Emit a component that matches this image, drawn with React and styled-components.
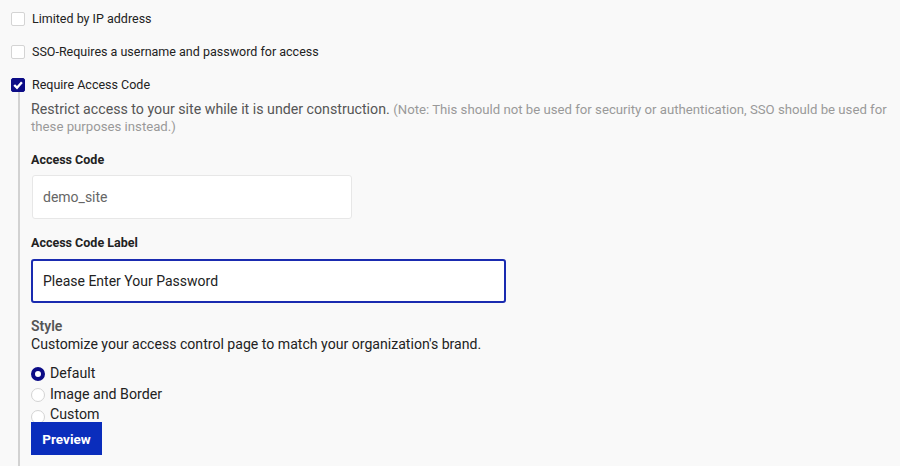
import React, { useState } from 'react';
import styled, { createGlobalStyle } from 'styled-components';

const GlobalStyle = createGlobalStyle`
  html, body {
    margin: 0;
    padding: 0;
    background: #f9f9f9;
    font-family: Roboto, "Noto Sans", "Liberation Sans", sans-serif;
    color: #222;
  }
`;

const Page = styled.div`
  padding: 11px 8px 0 11px;
  height: 455px;
  overflow: hidden;
`;

const OptionList = styled.div`
  display: flex;
  flex-direction: column;
  gap: 18px;
`;

const OptionRow = styled.label`
  display: flex;
  align-items: center;
  gap: 7px;
  height: 15px;
  font-size: 12.5px;
  color: #222;
  cursor: pointer;
`;

const Box = styled.span`
  width: 14px;
  height: 14px;
  box-sizing: border-box;
  border-radius: 2px;
  border: 1px solid ${p => (p.checked ? '#0c0c86' : '#d4d4d4')};
  background: ${p => (p.checked ? '#0c0c86' : '#fff')};
  display: flex;
  align-items: center;
  justify-content: center;
  flex-shrink: 0;
`;

const Nested = styled.div`
  margin-left: 7px;
  padding: 9px 0 0 11px;
  border-left: 2px solid #d2d2d2;
  height: 400px;
  display: flex;
  flex-direction: column;
  align-items: flex-start;
`;

const Intro = styled.p`
  margin: 0;
  font-size: 14.2px;
  line-height: 17px;
  color: #555;
`;

const Note = styled.span`
  font-size: 13.2px;
  color: #999;
`;

const FieldLabel = styled.div`
  margin: ${p => p.top}px 0 ${p => p.bottom}px;
  font-size: 12.5px;
  line-height: 15px;
  font-weight: 700;
  color: #222;
`;

const TextInput = styled.input`
  display: block;
  box-sizing: border-box;
  width: ${p => p.w}px;
  height: 44px;
  padding: 0 10px;
  border-radius: 3px;
  background: #fff;
  font-family: inherit;
  font-size: 14px;
  outline: none;
  border: ${p => (p.focused ? '2px solid #1a2bb0' : '1px solid #e7e7e7')};
  color: ${p => (p.focused ? '#222' : '#666')};
  margin-left: ${p => (p.focused ? '0' : '1px')};
`;

const SectionTitle = styled.div`
  margin-top: 15px;
  font-size: 14px;
  line-height: 17px;
  font-weight: 600;
  color: #555;
`;

const SectionText = styled.div`
  font-size: 14.1px;
  line-height: 17px;
  margin-top: 1px;
  color: #222;
`;

const RadioList = styled.div`
  margin-top: 10px;
  display: flex;
  flex-direction: column;
`;

const RadioRow = styled.label`
  display: flex;
  align-items: center;
  gap: 5px;
  height: 21px;
  font-size: 14.2px;
  line-height: 17px;
  color: #222;
  cursor: pointer;
  &:last-child {
    height: 17px;
    align-items: flex-start;
    padding-top: 1px;
  }
`;

const Dot = styled.span`
  width: 14px;
  height: 14px;
  box-sizing: border-box;
  border-radius: 50%;
  flex-shrink: 0;
  background: #fff;
  border: ${p => (p.checked ? '4px solid #0c0c86' : '1px solid #d4d4d4')};
  margin-top: ${p => (p.low ? '4px' : '0')};
`;

const PreviewButton = styled.button`
  width: 71px;
  height: 33px;
  padding: 0;
  border: none;
  border-radius: 0;
  background: #0a2dbc;
  color: #fff;
  font-family: inherit;
  font-size: 13.5px;
  font-weight: 700;
  cursor: pointer;
  margin-top: -1px;
`;

const Check = () => (
  <svg width="10" height="10" viewBox="0 0 10 10">
    <path d="M1.2 5 L4 7.7 L8.9 2.3" fill="none" stroke="#fff" strokeWidth="2.4" />
  </svg>
);

const options = [
  { id: 'ip', label: 'Limited by IP address' },
  { id: 'sso', label: 'SSO-Requires a username and password for access' },
  { id: 'code', label: 'Require Access Code' },
];

const styles = ['Default', 'Image and Border', 'Custom'];

const App = () => {
  const [checked, setChecked] = useState({ code: true });
  const [style, setStyle] = useState('Default');

  return (
    <>
      <GlobalStyle />
      <Page>
        <OptionList>
          {options.map(o => (
            <OptionRow key={o.id} onClick={() => setChecked({ ...checked, [o.id]: !checked[o.id] })}>
              <Box checked={checked[o.id]}>{checked[o.id] && <Check />}</Box>
              {o.label}
            </OptionRow>
          ))}
        </OptionList>
        <Nested>
          <Intro>
            Restrict access to your site while it is under construction.{' '}
            <Note>
              (Note: This should not be used for security or authentication, SSO should be used for
              these purposes instead.)
            </Note>
          </Intro>
          <FieldLabel top={17} bottom={8}>Access Code</FieldLabel>
          <TextInput w={320} defaultValue="demo_site" />
          <FieldLabel top={16} bottom={9}>Access Code Label</FieldLabel>
          <TextInput w={475} focused defaultValue="Please Enter Your Password" />
          <SectionTitle>Style</SectionTitle>
          <SectionText>Customize your access control page to match your organization's brand.</SectionText>
          <RadioList>
            {styles.map((s, i) => (
              <RadioRow key={s} onClick={() => setStyle(s)}>
                <Dot checked={style === s} low={i === styles.length - 1} />
                {s}
              </RadioRow>
            ))}
          </RadioList>
          <PreviewButton>Preview</PreviewButton>
        </Nested>
      </Page>
    </>
  );
};

export default App;
